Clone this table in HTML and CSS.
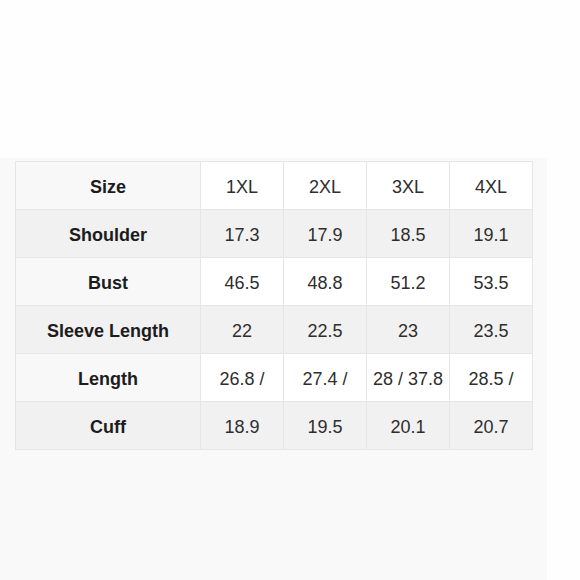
FILE: index.html
```html
<!DOCTYPE html>
<html>
<head>
<meta charset="utf-8">
<link rel="stylesheet" href="styles.css">
</head>
<body>
<div class="top"></div>
<div class="panel">
  <table class="sizes">
    <tr>
      <th><div class="cell">Size</div></th>
      <td><div class="cell">1XL</div></td>
      <td><div class="cell">2XL</div></td>
      <td><div class="cell">3XL</div></td>
      <td><div class="cell">4XL</div></td>
    </tr>
    <tr class="alt">
      <th><div class="cell">Shoulder</div></th>
      <td><div class="cell">17.3</div></td>
      <td><div class="cell">17.9</div></td>
      <td><div class="cell">18.5</div></td>
      <td><div class="cell">19.1</div></td>
    </tr>
    <tr>
      <th><div class="cell">Bust</div></th>
      <td><div class="cell">46.5</div></td>
      <td><div class="cell">48.8</div></td>
      <td><div class="cell">51.2</div></td>
      <td><div class="cell">53.5</div></td>
    </tr>
    <tr class="alt">
      <th><div class="cell">Sleeve Length</div></th>
      <td><div class="cell">22</div></td>
      <td><div class="cell">22.5</div></td>
      <td><div class="cell">23</div></td>
      <td><div class="cell">23.5</div></td>
    </tr>
    <tr>
      <th><div class="cell">Length</div></th>
      <td><div class="cell">26.8 /</div></td>
      <td><div class="cell">27.4 /</div></td>
      <td><div class="cell">28 / 37.8</div></td>
      <td><div class="cell">28.5 /</div></td>
    </tr>
    <tr class="alt">
      <th><div class="cell">Cuff</div></th>
      <td><div class="cell">18.9</div></td>
      <td><div class="cell">19.5</div></td>
      <td><div class="cell">20.1</div></td>
      <td><div class="cell">20.7</div></td>
    </tr>
  </table>
</div>
</body>
</html>
```
FILE: styles.css
```css
html, body {
  margin: 0;
  padding: 0;
  background: #fefefe;
  font-family: "Liberation Sans", Arial, sans-serif;
}
.top {
  height: 158px;
}
.panel {
  width: 547px;
  height: 422px;
  background: #f9f9f9;
  padding: 3px 0 0 15px;
  box-sizing: border-box;
}
.sizes {
  border-collapse: collapse;
  table-layout: fixed;
  width: 517px;
}
.sizes th, .sizes td {
  border: 1px solid #e6e6e6;
  padding: 0;
  background: #ffffff;
}
.sizes th {
  width: 184px;
  background: #f8f8f8;
  color: #1c1c1c;
  font-weight: bold;
}
.sizes td {
  width: 82px;
  color: #2e2e2e;
  font-weight: normal;
}
.sizes tr.alt th, .sizes tr.alt td {
  background: #f1f1f1;
}
.cell {
  height: 47px;
  line-height: 51px;
  overflow: hidden;
  white-space: nowrap;
  text-align: center;
  font-size: 18px;
  padding: 0 2px;
}
```
